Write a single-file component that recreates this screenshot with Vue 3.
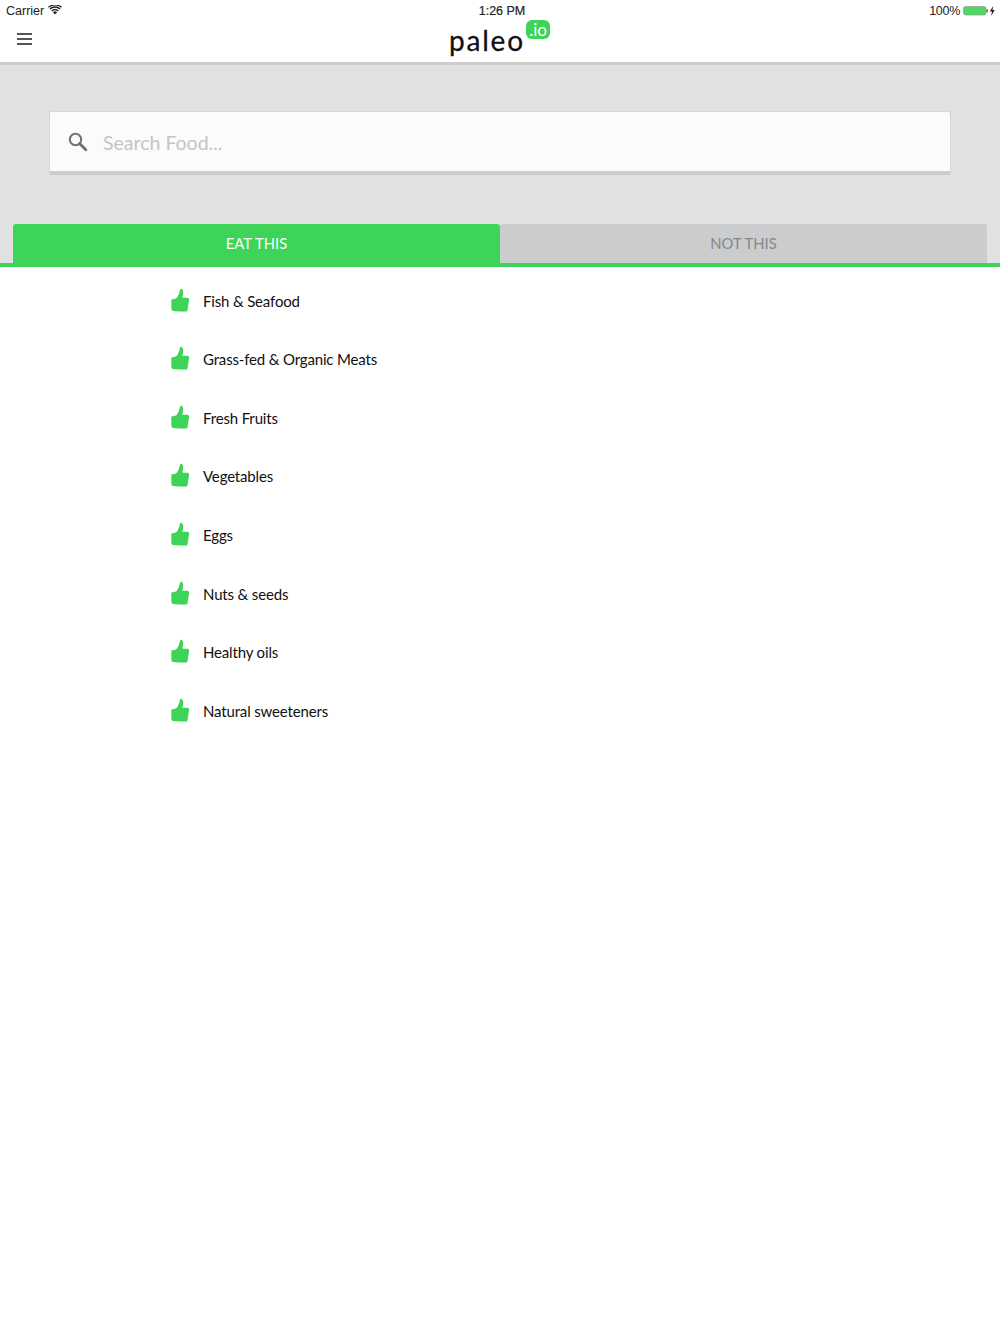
<template>
  <div class="page">
    <div class="status">
      <div class="status__left">
        <span>Carrier</span>
        <svg class="wifi" width="14" height="10" viewBox="0 0 14 10">
          <path d="M7 9.6 4.9 7.2a3 3 0 0 1 4.2 0z" fill="#222" />
          <path d="M3.7 6A4.9 4.9 0 0 1 10.3 6" fill="none" stroke="#222" stroke-width="1.3" />
          <path d="M1.8 4A7.7 7.7 0 0 1 12.2 4" fill="none" stroke="#222" stroke-width="1.3" />
          <path d="M.5 2.3A10 10 0 0 1 13.500 2.300" fill="none" stroke="#222" stroke-width="1.200" />
        </svg>
      </div>
      <div class="status__time">1:26 PM</div>
      <div class="status__right">
        <span class="status__pct">100%</span>
        <svg width="32" height="12" viewBox="0 0 32 12">
          <rect x="0.500" y="1.500" width="22.500" height="8.500" rx="2" fill="#4cd964" stroke="#9a9a9a" stroke-width="0.700" />
          <rect x="23.500" y="4.200" width="1.300" height="3.200" fill="#555" />
          <path d="M30.200 1 26.800 6.600h2.200l-.8 4.400 3.500-5.900h-2.200z" fill="#222" />
        </svg>
      </div>
    </div>

    <header class="nav">
      <button class="burger" aria-label="Menu">
        <span></span><span></span><span></span>
      </button>
      <div class="logo">
        <span class="logo__word">paleo</span>
        <span class="logo__badge">.io</span>
      </div>
    </header>

    <section class="hero">
      <div class="search">
        <svg width="20" height="20" viewBox="0 0 20 20">
          <circle cx="7.500" cy="7.500" r="5.700" fill="none" stroke="#707070" stroke-width="2" />
          <path d="M11.800 11.800 17.800 17.800" stroke="#707070" stroke-width="2.800" stroke-linecap="round" />
        </svg>
        <span class="search__placeholder">Search Food...</span>
      </div>
      <div class="tabs">
        <div class="tab tab--active">EAT THIS</div>
        <div class="tab">NOT THIS</div>
      </div>
    </section>

    <ul class="foods">
      <li v-for="food in foods" :key="food" class="food">
        <svg class="thumb" width="20" height="26" viewBox="0 0 20 26">
          <path
            d="M1.500 11.500 6 10.500C7.800 8.800 9.500 5.500 10 1.800 10.100.8 11 .4 11.800 1c1.500 1.100 1.700 3.600 1 6.500l-.5 2.200h4.900c1.400 0 2.100 1 1.900 2.200l-1.500 9.800c-.2 1.200-1 1.900-2.200 1.900-4 .1-8-.2-12-.6-1.200-.1-1.900-.8-2-2L1.300 12.500c0-.5 0-.9.200-1z"
            fill="#3ed457"
          />
        </svg>
        <span>{{ food }}</span>
      </li>
    </ul>
  </div>
</template>

<script setup>
const foods = [
  'Fish & Seafood',
  'Grass-fed & Organic Meats',
  'Fresh Fruits',
  'Vegetables',
  'Eggs',
  'Nuts & seeds',
  'Healthy oils',
  'Natural sweeteners'
]
</script>

<style>
html, body {
  background: #fff;
}
</style>

<style scoped>
.page {
  width: 1000px;
  height: 1334px;
  overflow: hidden;
  background: #fff;
  font-family: Lato, "Liberation Sans", sans-serif;
  color: #111;
}

.status {
  height: 20px;
  padding: 1px 5px 0 6px;
  box-sizing: border-box;
  display: grid;
  grid-template-columns: 1fr auto 1fr;
  align-items: center;
  font-family: "Liberation Sans", Arial, sans-serif;
  font-size: 12.500px;
  color: #222;
}

.status__left {
  display: flex;
  align-items: center;
  gap: 5px;
}

.wifi {
  margin-top: -1px;
  margin-left: -1px;
}

.status__time {
  font-weight: 500;
  -webkit-text-stroke: 0.2px #222;
  padding-left: 3px;
}

.status__right {
  display: flex;
  align-items: center;
  justify-content: flex-end;
  gap: 3px;
}

.status__pct {
  letter-spacing: -0.3px;
}

.nav {
  height: 42px;
  border-bottom: 3px solid #cdcdcd;
  position: relative;
  display: flex;
  justify-content: center;
}

.burger {
  position: absolute;
  left: 17px;
  top: 13px;
  width: 15px;
  padding: 0;
  border: 0;
  background: none;
  display: flex;
  flex-direction: column;
  gap: 3px;
}

.burger span {
  height: 2px;
  background: #555;
}

.logo {
  position: relative;
  width: 102px;
}

.logo__word {
  position: absolute;
  left: 0;
  top: 0;
  font-size: 28px;
  line-height: 40px;
  letter-spacing: 1.8px;
  -webkit-text-stroke: 0.3px #111;
  color: #111;
}

.logo__badge {
  position: absolute;
  right: 1px;
  top: 0;
  width: 24px;
  height: 19px;
  border-radius: 6px;
  background: #3ed457;
  color: #fff;
  font-size: 17px;
  line-height: 19px;
  text-align: center;
}

.hero {
  background: #e1e1e1;
  height: 198px;
  padding: 46px 13px 0;
  box-sizing: border-box;
  display: flex;
  flex-direction: column;
}

.search {
  margin: 0 36px;
  height: 64px;
  box-sizing: border-box;
  background: #fbfbfb;
  border: 1px solid #d6d6d6;
  border-bottom: 4px solid #cccccc;
  border-radius: 3px;
  padding-left: 18px;
  display: flex;
  align-items: center;
  gap: 15px;
}

.search__placeholder {
  font-size: 19.500px;
  color: #c4c4c8;
  padding-top: 1px;
}

.tabs {
  margin-top: 49px;
  display: flex;
  height: 39px;
}

.tab {
  flex: 1;
  display: flex;
  align-items: center;
  justify-content: center;
  padding-bottom: 1px;
  background: #cbccce;
  color: #85878a;
  font-size: 14.800px;
  border-radius: 3px 3px 0 0;
}

.tab--active {
  background: #3ed457;
  color: #fff;
}

.foods {
  list-style: none;
  margin: 0;
  padding: 4.400px 0 0 170px;
  border-top: 4px solid #3ed457;
}

.food {
  height: 58.600px;
  display: flex;
  align-items: center;
  gap: 13px;
  font-size: 15px;
  letter-spacing: -0.16px;
  color: #111;
}
</style>
